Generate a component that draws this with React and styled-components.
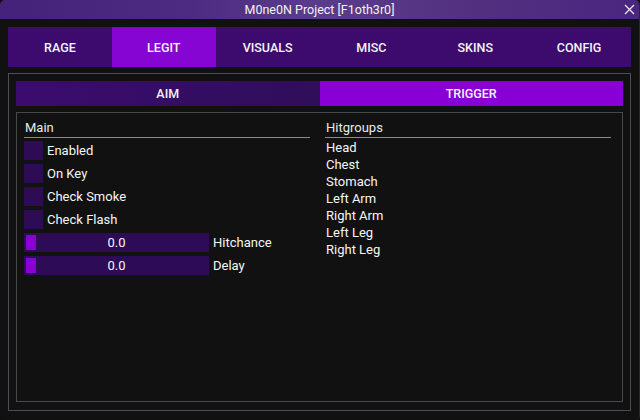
import React, { useState } from "react";
import styled, { createGlobalStyle } from "styled-components";

const GlobalStyle = createGlobalStyle`
  html, body {
    margin: 0;
    padding: 0;
    background: #0e0e0e;
  }
  body {
    font-family: Roboto, "DejaVu Sans", sans-serif;
    color: #fff;
  }
`;

const tabs = ["RAGE", "LEGIT", "VISUALS", "MISC", "SKINS", "CONFIG"];
const subTabs = ["AIM", "TRIGGER"];
const checks = ["Enabled", "On Key", "Check Smoke", "Check Flash"];
const sliders = [
  { label: "Hitchance", value: 0 },
  { label: "Delay", value: 0 },
];
const hitgroups = ["Head", "Chest", "Stomach", "Left Arm", "Right Arm", "Left Leg", "Right Leg"];

const Window = styled.div`
  width: 640px;
  height: 420px;
  box-sizing: border-box;
  background: #111111;
  border-radius: 5px;
  border-right: 1px solid #2a2a2e;
  overflow: hidden;
  display: flex;
  flex-direction: column;
`;

const TitleBar = styled.div`
  height: 19px;
  flex-shrink: 0;
  background: linear-gradient(90deg, #45227a 0%, #4d2b82 30%, #5b3c8c 50%, #52307f 75%, #4a2680 100%);
  display: flex;
  align-items: center;
  justify-content: center;
  position: relative;
  font-size: 12.5px;
  color: #f2f2f2;
`;

const Close = styled.button`
  position: absolute;
  right: 4px;
  top: 4px;
  width: 11px;
  height: 11px;
  padding: 0;
  border: 0;
  background: none;
  cursor: pointer;
  display: flex;
  align-items: center;
  justify-content: center;
`;

const Body = styled.div`
  flex: 1;
  padding: 8px 8px 9px 8px;
  display: flex;
  flex-direction: column;
  gap: 6px;
`;

const TabBar = styled.div`
  height: 40px;
  display: grid;
  grid-template-columns: repeat(6, 1fr);
  background: #3c0b6d;
`;

const Tab = styled.div`
  display: flex;
  align-items: center;
  justify-content: center;
  font-size: 12.5px;
  font-weight: 500;
  color: #f4f4f4;
  background: ${(p) => (p.$active ? "#8705d3" : "transparent")};
  cursor: pointer;
`;

const Frame = styled.div`
  flex: 1;
  border: 1px solid #4c4c52;
  padding: 7px 7px 8px 7px;
  display: flex;
  flex-direction: column;
  gap: 6px;
`;

const SubTabs = styled.div`
  height: 25px;
  display: grid;
  grid-template-columns: 1fr 1fr;
`;

const SubTab = styled.div`
  display: flex;
  align-items: center;
  justify-content: center;
  font-size: 12.5px;
  font-weight: 500;
  color: #f4f4f4;
  background: ${(p) =>
    p.$active ? "#8800d5" : "linear-gradient(90deg, #3b0c6e 0%, #2f0e5a 100%)"};
  cursor: pointer;
`;

const Panel = styled.div`
  flex: 1;
  border: 1px solid #47474c;
  padding: 6px 10px 4px 7px;
  display: grid;
  grid-template-columns: 286px 1px 286px;
  column-gap: 7px;
`;

const Column = styled.div`
  display: flex;
  flex-direction: column;
`;

const Divider = styled.div`
  background: #8a8a8a;
  margin-top: 2px;
  margin-left: 1px;
`;

const Header = styled.div`
  font-size: 13px;
  line-height: 17px;
  padding-bottom: 1px;
  color: #eaeaea;
  border-bottom: 1px solid #8c8c8c;
  padding-left: 1px;
  margin-bottom: 3px;
`;

const Rows = styled.div`
  display: flex;
  flex-direction: column;
  gap: 4px;
`;

const Row = styled.label`
  display: flex;
  align-items: center;
  gap: 4px;
  height: 19px;
  font-size: 13px;
  color: #f6f6f6;
  cursor: pointer;
`;

const Box = styled.span`
  width: 19px;
  height: 19px;
  background: ${(p) => (p.$on ? "#8800d5" : "#2d0c55")};
`;

const Slider = styled.div`
  width: 185px;
  height: 19px;
  background: #2e0b57;
  position: relative;
  display: flex;
  align-items: center;
  justify-content: center;
  font-size: 13px;
  color: #f6f6f6;
`;

const Grab = styled.span`
  position: absolute;
  left: 2px;
  top: 2px;
  width: 10px;
  height: 15px;
  background: #8a00d3;
`;

const List = styled.div`
  display: flex;
  flex-direction: column;
  margin-top: -2px;
`;

const Item = styled.div`
  font-size: 13px;
  line-height: 17px;
  color: #f6f6f6;
  padding-left: 1px;
`;

export default function App() {
  const [tab, setTab] = useState("LEGIT");
  const [sub, setSub] = useState("TRIGGER");
  const [on, setOn] = useState({});

  return (
    <>
      <GlobalStyle />
      <Window>
        <TitleBar>
          M0ne0N Project [F1oth3r0]
          <Close aria-label="close">
            <svg width="11" height="11" viewBox="0 0 11 11">
              <path d="M1 1L10 10M10 1L1 10" stroke="#e8e8e8" strokeWidth="1.3" />
            </svg>
          </Close>
        </TitleBar>
        <Body>
          <TabBar>
            {tabs.map((t) => (
              <Tab key={t} $active={t === tab} onClick={() => setTab(t)}>
                {t}
              </Tab>
            ))}
          </TabBar>
          <Frame>
            <SubTabs>
              {subTabs.map((t) => (
                <SubTab key={t} $active={t === sub} onClick={() => setSub(t)}>
                  {t}
                </SubTab>
              ))}
            </SubTabs>
            <Panel>
              <Column>
                <Header>Main</Header>
                <Rows>
                  {checks.map((c) => (
                    <Row key={c} onClick={() => setOn({ ...on, [c]: !on[c] })}>
                      <Box $on={on[c]} />
                      {c}
                    </Row>
                  ))}
                  {sliders.map((s) => (
                    <Row key={s.label}>
                      <Slider>
                        <Grab />
                        {s.value.toFixed(1)}
                      </Slider>
                      {s.label}
                    </Row>
                  ))}
                </Rows>
              </Column>
              <Divider />
              <Column>
                <Header>Hitgroups</Header>
                <List>
                  {hitgroups.map((h) => (
                    <Item key={h}>{h}</Item>
                  ))}
                </List>
              </Column>
            </Panel>
          </Frame>
        </Body>
      </Window>
    </>
  );
}
